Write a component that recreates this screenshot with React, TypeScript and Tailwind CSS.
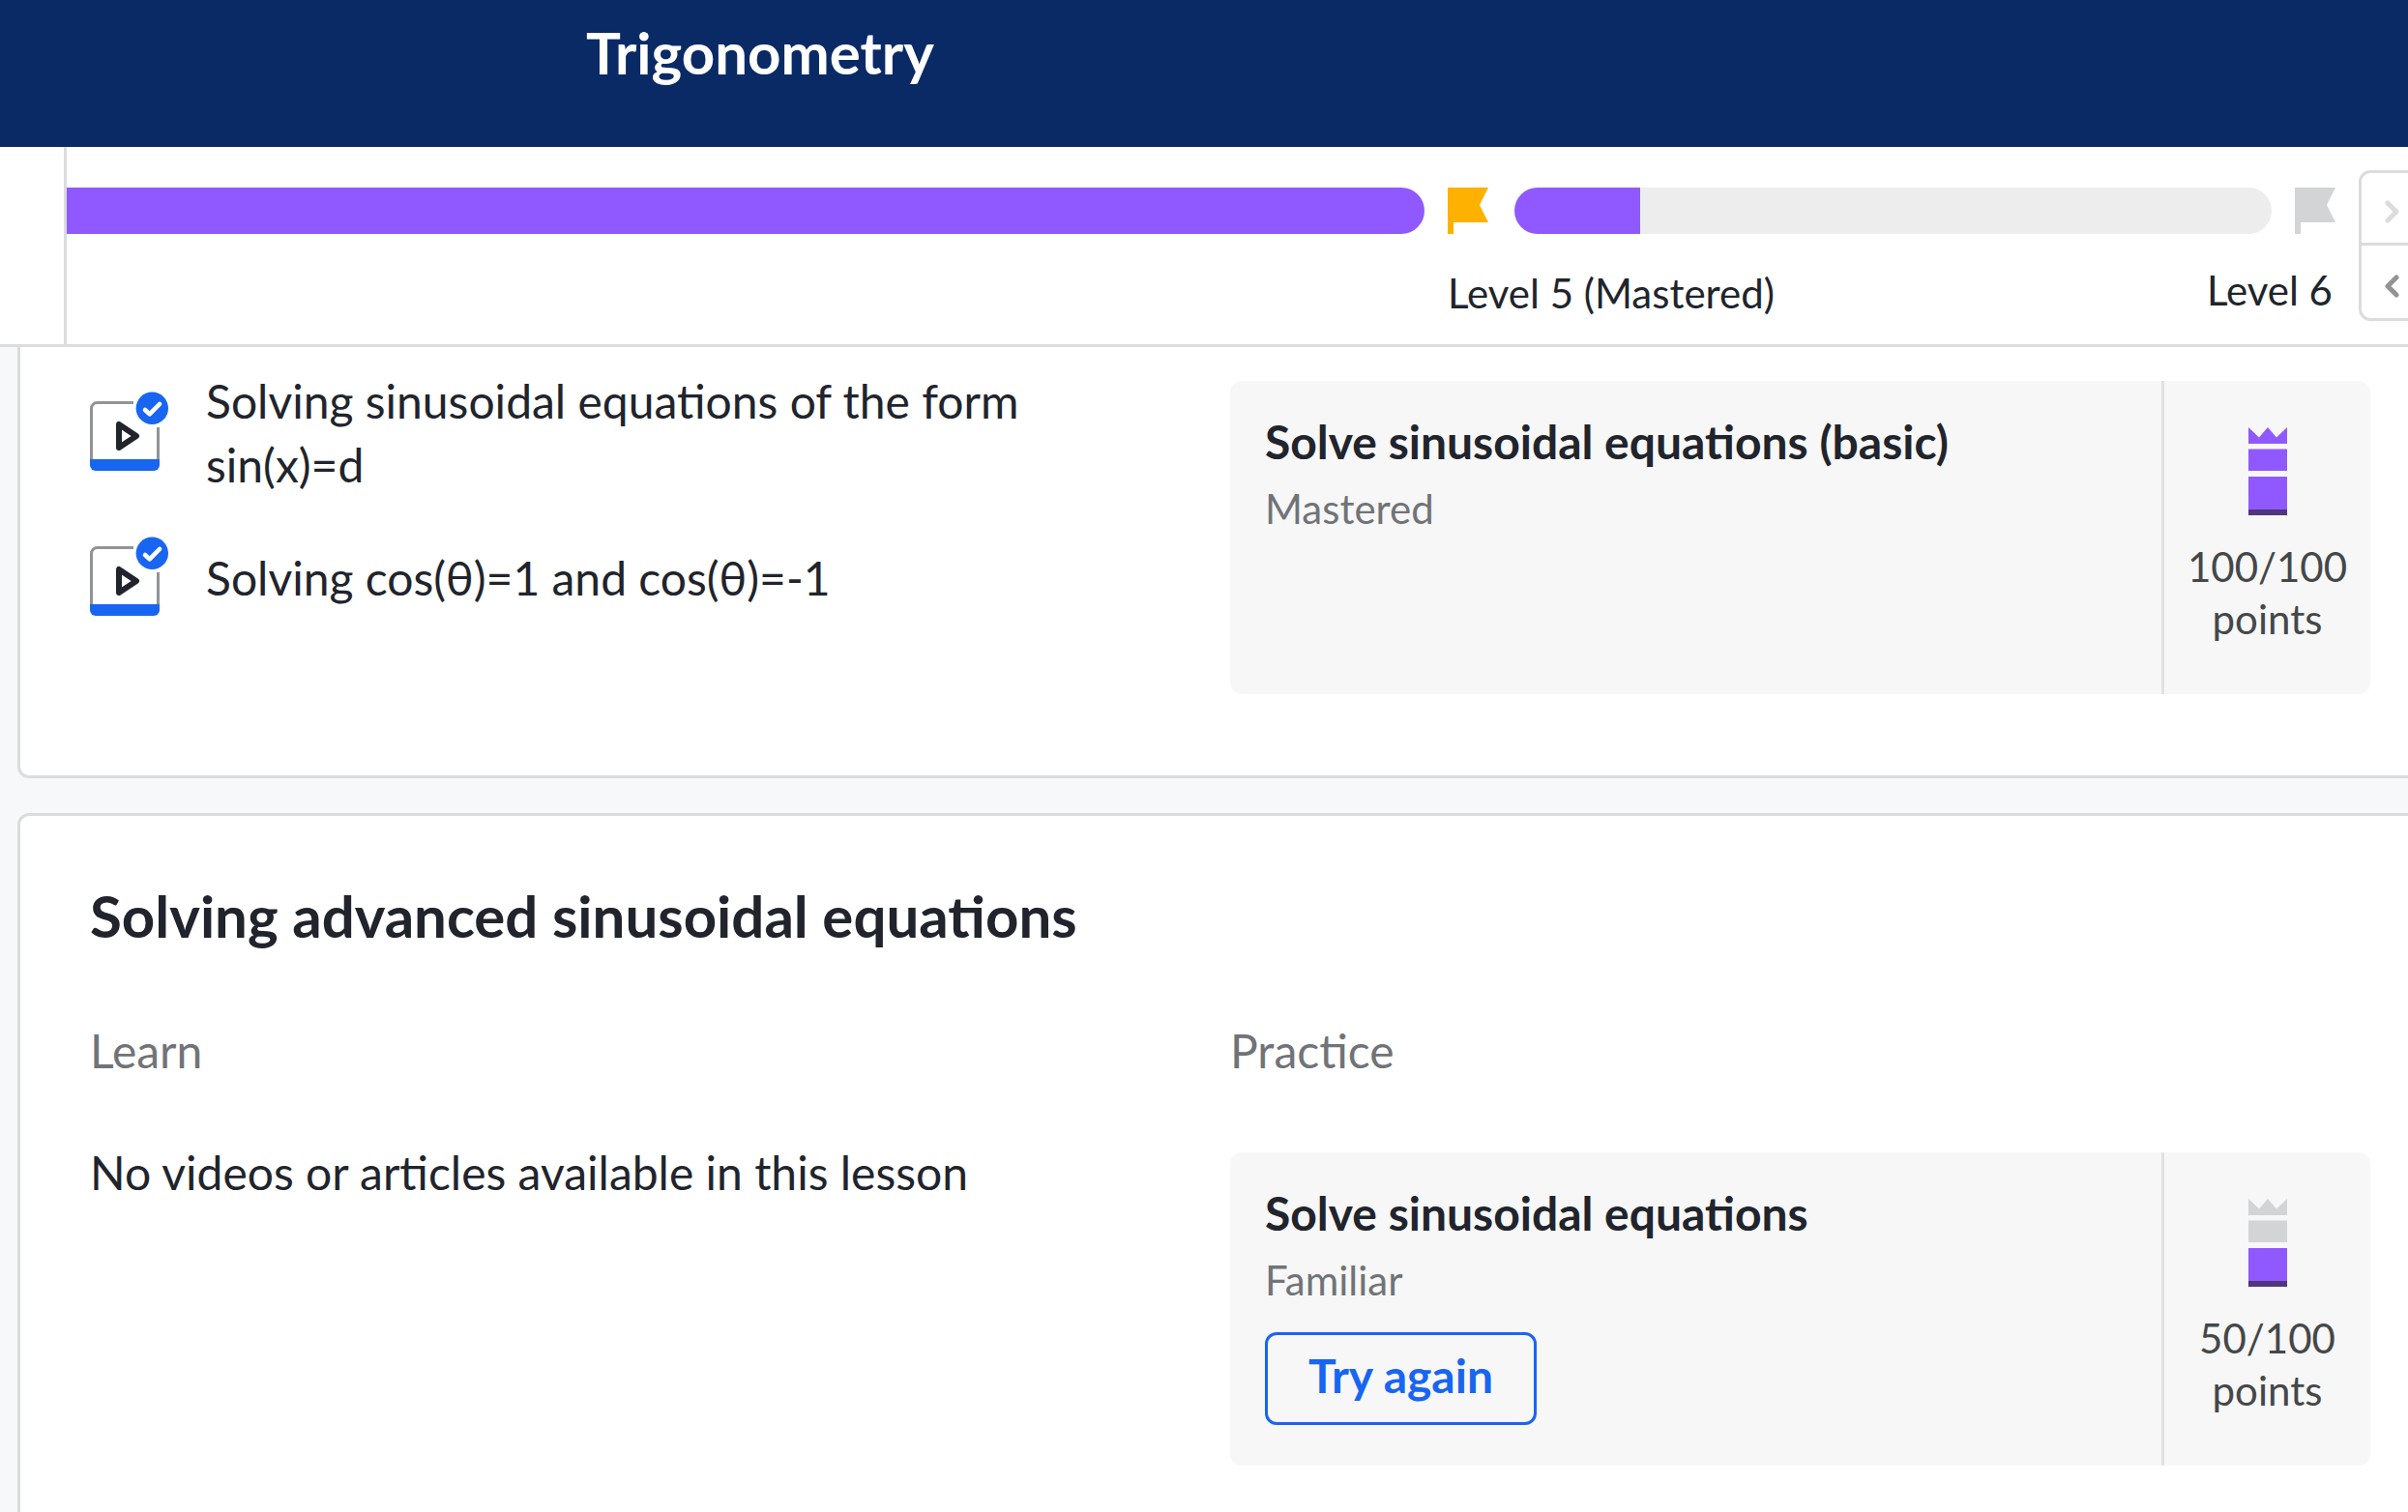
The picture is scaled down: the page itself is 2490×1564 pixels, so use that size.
import type { ReactNode } from "react"

const PURPLE = "#9059ff"
const OFF = "#d3d4d6"

const Flag = ({ color }: { color: string }) => (
  <svg className="h-[48px] w-[42px] shrink-0" viewBox="0 0 42 48" fill={color}>
    <path d="M0 0H42L33 18L42 36H6V48H0Z" />
  </svg>
)

const VideoIcon = () => (
  <svg className="size-[72px] shrink-0 overflow-visible" viewBox="0 0 72 72" fill="none">
    <path d="M1.5 61V7.5a6 6 0 0 1 6-6H45M70.5 27V61" stroke="#929396" strokeWidth="3" />
    <path d="M0 60H72V66a6 6 0 0 1-6 6H6a6 6 0 0 1-6-6Z" fill="#1865f2" />
    <path d="M30 24V48L48 36Z" stroke="#21242c" strokeWidth="6" strokeLinejoin="round" />
    <circle cx="64.3" cy="7.3" r="16.7" fill="#1865f2" />
    <path d="M57 9L61.7 13.4L72 3" stroke="#fff" strokeWidth="4.6" strokeLinecap="round" strokeLinejoin="round" />
  </svg>
)

// the tower fills up from the base as the skill level goes up
const MasteryIcon = ({ level }: { level: number }) => (
  <svg className="h-[91px] w-[40px]" viewBox="0 0 40 91">
    <path d="M0 0L11 10.5L20 0L29 10.5L40 0V17H0Z" fill={level > 2 ? PURPLE : OFF} />
    <path d="M0 22.5H40V45H0Z" fill={level > 1 ? PURPLE : OFF} />
    <path d="M0 51H40V91H0Z" fill={level > 0 ? PURPLE : OFF} />
    <path d="M0 85H40V91H0Z" fill="#50367d" />
  </svg>
)

const Chevron = ({ d, color }: { d: string; color: string }) => (
  <svg className="h-[24px] w-[15px]" viewBox="0 0 15 24" fill="none">
    <path d={d} stroke={color} strokeWidth="5" strokeLinecap="round" strokeLinejoin="round" />
  </svg>
)

const Video = ({ children }: { children: ReactNode }) => (
  <li>
    <a href="#" className="flex items-center gap-[48px]">
      <VideoIcon />
      <span className="pb-[6px]">{children}</span>
    </a>
  </li>
)

type ExerciseProps = { title: string; status: string; points: string; level: number; action?: string }

const Exercise = ({ title, status, points, level, action }: ExerciseProps) => (
  <div className="flex min-h-[324px] rounded-[12px] bg-[#f7f7f7]">
    <div className="flex flex-1 flex-col items-start px-[36px] pt-[33px]">
      <a href="#" className="mb-[12px] text-[48px] leading-[60px] font-bold">{title}</a>
      <span className="text-[42px] leading-[54px] text-[#717378]">{status}</span>
      {action && (
        <button className="mt-[27px] h-[96px] rounded-[12px] border-3 border-[#1865f2] px-[42px] pb-[6px] text-[48px] leading-[60px] font-bold text-[#1865f2]">
          {action}
        </button>
      )}
    </div>
    <div className="flex w-[216px] flex-col items-center border-l-3 border-[#e2e2e3] pt-[48px] text-[42px] leading-[54px] text-[#454749]">
      <MasteryIcon level={level} />
      <span className="mt-[26px]">{points}</span>
      <span>points</span>
    </div>
  </div>
)

const Progress = () => (
  <section className="flex shrink-0 border-b-3 border-[#dbdcdd] bg-white">
    <div className="w-[69px] shrink-0 border-r-3 border-[#dbdcdd]" />
    <div className="grid flex-1 grid-cols-[1428fr_918fr] pt-[42px] pr-[24px] pb-[23px]">
      <div className="pr-[24px]">
        <div className="h-[48px] rounded-r-full bg-[#9059ff]" />
      </div>
      <div>
        <div className="flex">
          <Flag color="#ffb100" />
          <div className="mr-[24px] ml-[27px] h-[48px] flex-1 overflow-hidden rounded-full bg-[#ededed]">
            <div className="h-full bg-[#9059ff]" style={{ width: `${(130 / 783) * 100}%` }} />
          </div>
          <Flag color={OFF} />
        </div>
        <div className="flex items-start justify-between pt-[31px] pr-[3px] text-[42px]">
          <a href="#" className="leading-[60px]">Level 5 (Mastered)</a>
          <span className="leading-[54px]">Level 6</span>
        </div>
      </div>
    </div>
    <div className="mt-[24px] mr-[-18px] flex h-[156px] w-[69px] shrink-0 flex-col rounded-[12px] border-3 border-[#dbdcdd]">
      <button aria-label="Next level" disabled className="flex h-[75px] items-center justify-center border-b-3 border-[#dbdcdd] pt-[8px]">
        <Chevron d="M3 3L12 12L3 21" color="#dbdcdd" />
      </button>
      <button aria-label="Previous level" className="flex h-[75px] items-center justify-center pt-[8px]">
        <Chevron d="M12 3L3 12L12 21" color="#929396" />
      </button>
    </div>
  </section>
)

const App = () => {
  return (
    <div className="flex h-screen flex-col overflow-hidden bg-[#f7f8fa] font-['Lato',sans-serif] text-[#21242c]">
      <header className="h-[152px] shrink-0 bg-[#0a2a66] pt-[18px] pl-[606px]">
        <h1 className="text-[60px] leading-[72px] font-bold text-white">Trigonometry</h1>
      </header>

      <Progress />

      <main className="mr-[-36px] ml-[18px] flex flex-col gap-[36px] text-[48px] leading-[66px]">
        <section className="grid shrink-0 grid-cols-2 rounded-b-[12px] border-3 border-t-0 border-[#dbdcdd] bg-white px-[72px] pb-[84px]">
          <ul className="flex flex-col gap-[45px] pt-[23px] pr-[72px]">
            <Video>Solving sinusoidal equations of the form sin(x)=d</Video>
            <Video>Solving cos(θ)=1 and cos(θ)=-1</Video>
          </ul>
          <div className="pt-[35px]">
            <Exercise title="Solve sinusoidal equations (basic)" status="Mastered" points="100/100" level={3} />
          </div>
        </section>

        <section className="shrink-0 rounded-[12px] border-3 border-[#dbdcdd] bg-white px-[72px] pt-[67px] pb-[84px]">
          <h2 className="mb-[71px] text-[60px] leading-[72px] font-bold">Solving advanced sinusoidal equations</h2>
          <div className="grid grid-cols-2">
            <div>
              <h3 className="mb-[60px] text-[#717378]">Learn</h3>
              <p>No videos or articles available in this lesson</p>
            </div>
            <div>
              <h3 className="mb-[72px] text-[#717378]">Practice</h3>
              <Exercise title="Solve sinusoidal equations" status="Familiar" points="50/100" level={1} action="Try again" />
            </div>
          </div>
        </section>
      </main>
    </div>
  )
}
export default App
